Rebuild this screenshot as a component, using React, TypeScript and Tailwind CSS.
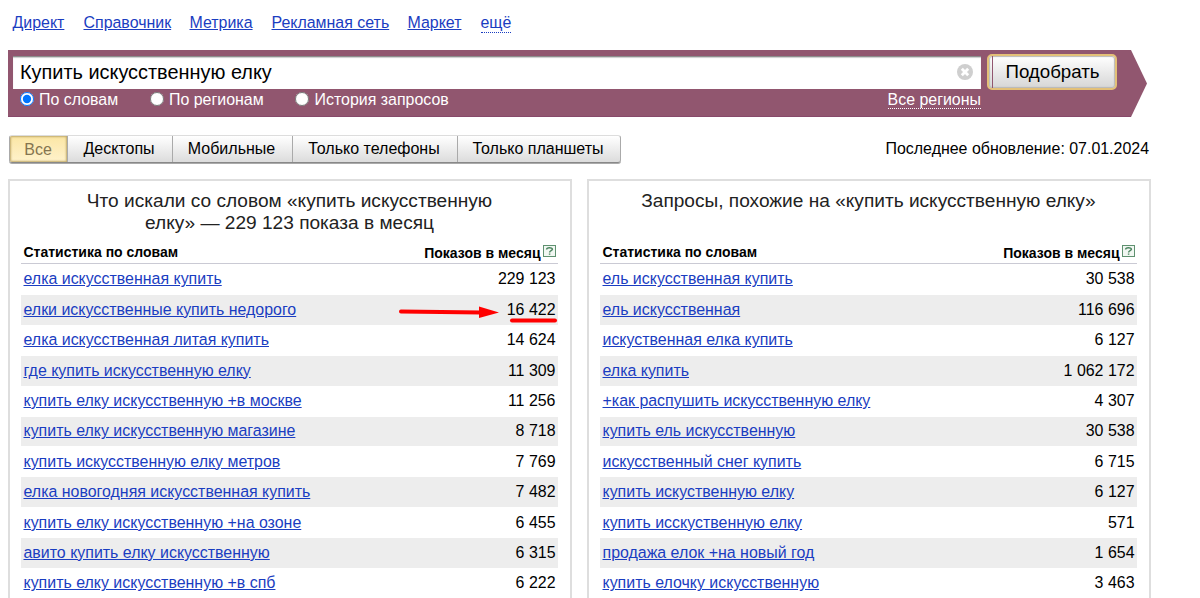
import React, { useState } from "react";

type Row = { phrase: string; shows: string };

const services = [
  { name: "Директ", width: "w-[52px]" },
  { name: "Справочник", width: "w-[87px]" },
  { name: "Метрика", width: "w-[63px]" },
  { name: "Рекламная сеть", width: "w-[117px]" },
  { name: "Маркет", width: "w-[54px]" },
];

const devices = [
  { name: "Все", width: "w-[58px]" },
  { name: "Десктопы", width: "w-[105px]" },
  { name: "Мобильные", width: "w-[120px]" },
  { name: "Только телефоны", width: "w-[165px]" },
  { name: "Только планшеты", width: "w-[162px]" },
];

const modes = [
  { name: "По словам", width: "w-[130px]" },
  { name: "По регионам", width: "w-[145.5px]" },
  { name: "История запросов", width: "w-[160px]" },
];

const searched: Row[] = [
  { phrase: "елка искусственная купить", shows: "229 123" },
  { phrase: "елки искусственные купить недорого", shows: "16 422" },
  { phrase: "елка искусственная литая купить", shows: "14 624" },
  { phrase: "где купить искусственную елку", shows: "11 309" },
  { phrase: "купить елку искусственную +в москве", shows: "11 256" },
  { phrase: "купить елку искусственную магазине", shows: "8 718" },
  { phrase: "купить искусственную елку метров", shows: "7 769" },
  { phrase: "елка новогодняя искусственная купить", shows: "7 482" },
  { phrase: "купить елку искусственную +на озоне", shows: "6 455" },
  { phrase: "авито купить елку искусственную", shows: "6 315" },
  { phrase: "купить елку искусственную +в спб", shows: "6 222" },
];

const similar: Row[] = [
  { phrase: "ель искусственная купить", shows: "30 538" },
  { phrase: "ель искусственная", shows: "116 696" },
  { phrase: "искуственная елка купить", shows: "6 127" },
  { phrase: "елка купить", shows: "1 062 172" },
  { phrase: "+как распушить искусственную елку", shows: "4 307" },
  { phrase: "купить ель искусственную", shows: "30 538" },
  { phrase: "искусственный снег купить", shows: "6 715" },
  { phrase: "купить искуственную елку", shows: "6 127" },
  { phrase: "купить исскуственную елку", shows: "571" },
  { phrase: "продажа елок +на новый год", shows: "1 654" },
  { phrase: "купить елочку искусственную", shows: "3 463" },
];

const HelpIcon: React.FC = () => (
  <svg width="13" height="12" viewBox="0 0 13 12" className="ml-[2px] mb-[6px]">
    <rect x="0.5" y="0.5" width="12" height="11" fill="#f1f7f2" stroke="#5f9170" />
    <path
      d="M3.6 4.4C3.6 2.2 9.4 2.2 9.4 4.2C9.4 5.6 6.6 5.6 6.6 7.4M6.6 8.4v1.4"
      fill="none"
      stroke="#4d8560"
      strokeWidth="1.5"
    />
  </svg>
);

const StatsPanel: React.FC<{
  title: React.ReactNode;
  rows: Row[];
}> = ({ title, rows }) => (
  <section className="w-[564px] h-[440px] border-2 border-[#dedede] pl-[11px] pr-[12px] pt-[9px]">
    <h2 className="h-[52px] text-center text-[19.1px] leading-[22px] text-[#222]">
      {title}
    </h2>
    <div className="flex h-[22px] items-end justify-between border-b border-[#cacad4] px-[2.5px] text-[14px] leading-[20px] font-bold">
      <span className="pb-[1px]">Статистика по словам</span>
      <span className="flex items-end">
        Показов в месяц
        <HelpIcon />
      </span>
    </div>
    {rows.map((row, i) => (
      <div key={row.phrase} className="h-[30.4px] pt-[0.6px]">
        <div
          className={`flex h-[29.8px] items-center justify-between px-[2.5px] text-[15.95px] leading-[20px] ${
            i % 2 ? "bg-[#ededed]" : ""
          }`}
        >
          <a href="#" className="text-[#1a3dc1] underline">
            {row.phrase}
          </a>
          <span>{row.shows}</span>
        </div>
      </div>
    ))}
  </section>
);

const App: React.FC = () => {
  const [query, setQuery] = useState("Купить искусственную елку");
  const [mode, setMode] = useState("По словам");
  const [device, setDevice] = useState("Все");

  return (
    <div className="relative h-[598px] w-[1200px] overflow-hidden bg-white pl-2 font-['Liberation_Sans',Arial,sans-serif] text-[15.95px] text-black">
      <nav className="flex h-[50px] gap-[19px] pl-[4.5px] pt-[13px] leading-[20px] text-[#1a3dc1]">
        {services.map((s) => (
          <a key={s.name} href="#" className={`${s.width} whitespace-nowrap underline`}>
            {s.name}
          </a>
        ))}
        <a href="#" className="h-[20px] border-b border-dotted border-[#1a3dc1]">
          ещё
        </a>
      </nav>

      <div className="flex h-[67px]">
        <form className="flex w-[1123px] items-start border-b border-[#87496a] bg-[#91566f] pl-[5px]">
          <div className="w-[968px] pt-[6px]">
            <div className="flex h-[33px] items-center border-t border-[#8d8d8d] bg-white pl-[7px] pr-[8px] shadow-[inset_0_1px_1px_#ccc]">
              <input
                className="flex-1 bg-transparent pb-[2px] text-[19.9px] leading-[24px] outline-none"
                value={query}
                onChange={(e) => setQuery(e.target.value)}
              />
              <svg width="16" height="16" viewBox="0 0 16 16" className="mb-[2px]">
                <circle cx="8" cy="8" r="8" fill="#cfcfcf" />
                <path d="M4.8 4.8l6.4 6.4M11.2 4.8l-6.4 6.4" stroke="#fff" strokeWidth="2.8" />
              </svg>
            </div>
            <div className="flex justify-between pl-[6.5px] text-white">
              <div className="flex">
                {modes.map((m) => (
                  <label key={m.name} className={`${m.width} flex items-start whitespace-nowrap leading-[22px]`}>
                    <input
                      type="radio"
                      name="mode"
                      className="mt-[3px] mr-[5.5px] size-[14px]"
                      checked={mode === m.name}
                      onChange={() => setMode(m.name)}
                    />
                    {m.name}
                  </label>
                ))}
              </div>
              <a href="#" className="h-[20px] border-b border-dotted border-white leading-[21px]">
                Все регионы
              </a>
            </div>
          </div>
          <button
            type="button"
            className="mt-[4px] ml-[6px] flex h-[36px] w-[130px] rounded-[5px] border-2 border-[#e3c078] bg-linear-to-b from-white to-[#d6d6d6] text-[18.7px] leading-[31px] shadow-[inset_0_0_1px_1px_#b9b9b9]"
          >
            <span className="h-full w-[4px] border-r border-[#91566f]" />
            <span className="flex-1 pr-[3px]">Подобрать</span>
          </button>
        </form>
        <svg width="16" height="67" viewBox="0 0 16 67">
          <path d="M0 0L16 33.5L0 67Z" fill="#91566f" />
        </svg>
      </div>

      <div className="flex items-start justify-between pt-[18px] pr-[51px]">
        <div className="ml-px flex h-[28px] overflow-hidden rounded-[3px] border border-t-[#ddd] border-x-[#aaa] border-b-[#888] bg-linear-to-b from-white to-[#dcdcdc] shadow-[0_1px_0_#aaa]">
          {devices.map((d) => (
            <button
              key={d.name}
              onClick={() => setDevice(d.name)}
              className={`${d.width} whitespace-nowrap border-r border-[#aaa] pr-[2px] text-[16px] last:border-r-0 ${
                device === d.name
                  ? "bg-linear-to-b from-[#fbe6a4] to-[#fff2cc] pt-[1px] pl-[1px] text-[#857550] shadow-[inset_0_0_2px_1px_#c1aa6b]"
                  : ""
              }`}
            >
              {d.name}
            </button>
          ))}
        </div>
        <span className="pt-[4px] text-[15.95px] leading-[20px]">Последнее обновление: 07.01.2024</span>
      </div>

      <main className="flex gap-[15px] pt-[16px]">
        <StatsPanel
          title={
            <>
              Что искали со словом «купить искусственную
              <br />
              елку» — 229 123 показа в месяц
            </>
          }
          rows={searched}
        />
        <StatsPanel title="Запросы, похожие на «купить искусственную елку»" rows={similar} />
      </main>

      {/* marker over the second result */}
      <svg className="pointer-events-none absolute left-[395px] top-[300px]" width="168" height="26" viewBox="0 0 168 26">
        <path d="M6 11.5L86 12.5" stroke="#f00" strokeWidth="4" strokeLinecap="round" />
        <path d="M84 6.5L104 12.5L84 18Z" fill="#f00" />
        <path d="M117 20.5H160" stroke="#f00" strokeWidth="4" strokeLinecap="round" />
      </svg>
    </div>
  );
};

export default App;
